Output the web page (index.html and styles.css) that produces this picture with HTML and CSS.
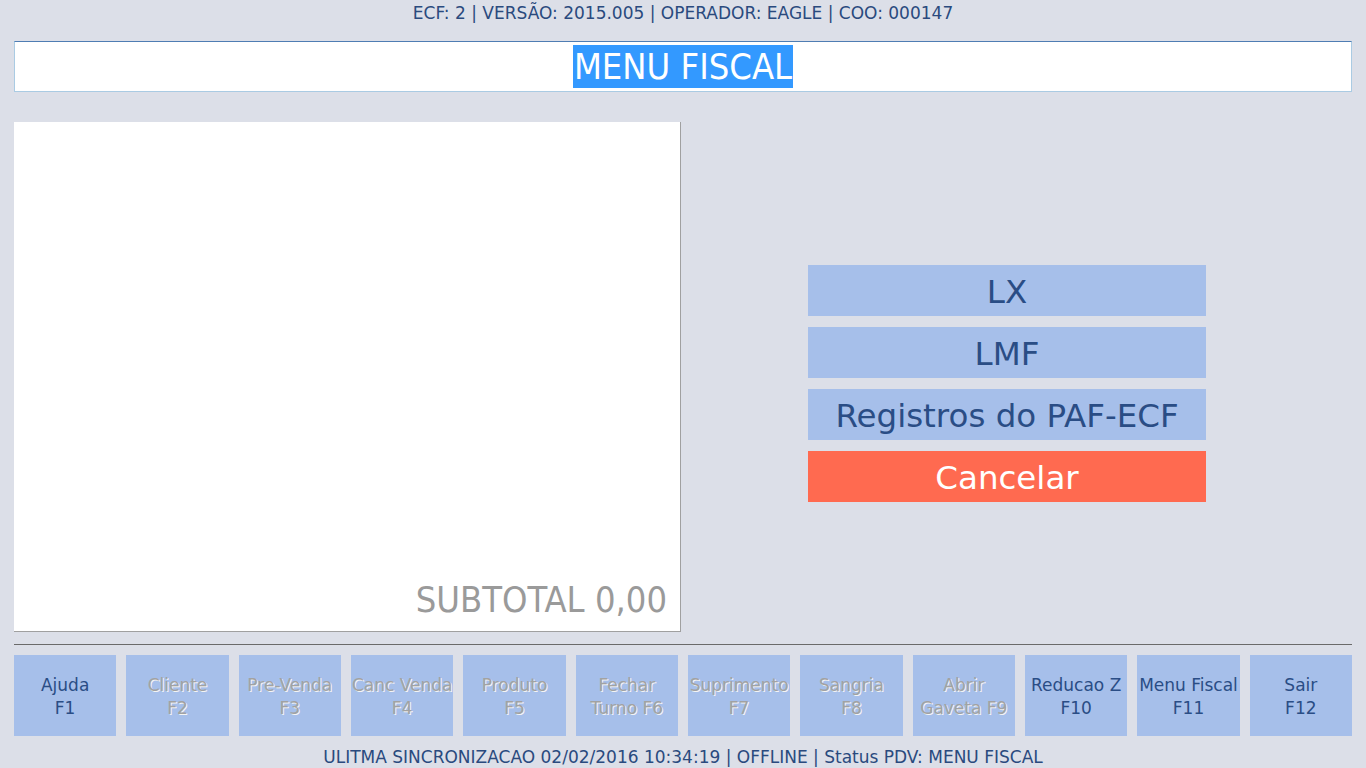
FILE: index.html
```html
<!DOCTYPE html>
<html lang="pt">
<head>
<meta charset="utf-8">
<title>PDV - Menu Fiscal</title>
<link rel="stylesheet" href="styles.css">
</head>
<body>
<div class="app">
  <div class="topbar">ECF: 2 | VERSÃO: 2015.005 | OPERADOR: EAGLE | COO: 000147</div>
  <div class="title"><span class="sel">MENU FISCAL</span></div>
  <div class="main">
    <div class="panel">
      <div class="subtotal">SUBTOTAL 0,00</div>
    </div>
    <div class="menu">
      <div class="mbtn">LX</div>
      <div class="mbtn">LMF</div>
      <div class="mbtn">Registros do PAF-ECF</div>
      <div class="mbtn cancel">Cancelar</div>
    </div>
  </div>
  <div class="rule"></div>
  <div class="fkeys">
    <div class="fkey">Ajuda<br>F1</div>
    <div class="fkey off">Cliente<br>F2</div>
    <div class="fkey off">Pre-Venda<br>F3</div>
    <div class="fkey off">Canc Venda<br>F4</div>
    <div class="fkey off">Produto<br>F5</div>
    <div class="fkey off">Fechar<br>Turno F6</div>
    <div class="fkey off">Suprimento<br>F7</div>
    <div class="fkey off">Sangria<br>F8</div>
    <div class="fkey off">Abrir<br>Gaveta F9</div>
    <div class="fkey">Reducao Z<br>F10</div>
    <div class="fkey">Menu Fiscal<br>F11</div>
    <div class="fkey">Sair<br>F12</div>
  </div>
  <div class="status">ULITMA SINCRONIZACAO 02/02/2016 10:34:19 | OFFLINE | Status PDV: MENU FISCAL</div>
</div>
</body>
</html>
```

FILE: styles.css
```css
html, body {
  margin: 0;
  padding: 0;
  background: #dcdfe8;
}
body {
  font-family: "DejaVu Sans", sans-serif;
  color: #2a4a7e;
}
.app {
  width: 1366px;
  height: 768px;
  display: flex;
  flex-direction: column;
  overflow: hidden;
}
.topbar {
  height: 26px;
  line-height: 27px;
  text-align: center;
  font-size: 17px;
}
.title {
  margin: 15px 14px 0 14px;
  height: 49px;
  background: #fff;
  border: 1px solid #aacbe3;
  border-top-color: #4f7db3;
  display: flex;
  justify-content: center;
  align-items: center;
}
.sel {
  font-family: "DejaVu Sans Condensed", "DejaVu Sans", sans-serif;
  background: #3399ff;
  color: #fff;
  font-size: 36px;
  line-height: 43px;
  padding: 0 1px;
}
.main {
  margin-top: 30px;
  height: 510px;
  display: flex;
}
.panel {
  margin-left: 14px;
  width: 666px;
  height: 509px;
  background: #fff;
  border-right: 1px solid #a0a0a0;
  border-bottom: 1px solid #a0a0a0;
  display: flex;
  align-items: flex-end;
  justify-content: flex-end;
}
.subtotal {
  font-family: "DejaVu Sans Condensed", "DejaVu Sans", sans-serif;
  font-size: 36px;
  color: #9a9a9a;
  padding: 0 13px 9px 0;
  line-height: 44px;
}
.menu {
  margin-left: 127px;
  padding-top: 143px;
  width: 398px;
  display: flex;
  flex-direction: column;
  gap: 11px;
}
.mbtn {
  height: 51px;
  line-height: 54px;
  background: #a6bfea;
  color: #2a4d85;
  font-size: 32.5px;
  text-align: center;
  white-space: nowrap;
}
.mbtn.cancel {
  background: #ff6a50;
  color: #fff;
}
.rule {
  margin: 12px 14px 0 14px;
  height: 1px;
  background: #6a6a6a;
}
.fkeys {
  margin: 10px 14px 0 14px;
  height: 82px;
  display: grid;
  grid-template-columns: repeat(12, 1fr);
  gap: 10px;
}
.fkey {
  background: #a6bfea;
  color: #2a4d85;
  font-size: 17px;
  line-height: 23px;
  padding-top: 4px;
  box-sizing: border-box;
  text-align: center;
  display: flex;
  align-items: center;
  justify-content: center;
  white-space: nowrap;
  overflow: hidden;
}
.fkey.off {
  color: #a2a2a2;
  text-shadow: 1px 1px 0 #f4f4f4;
}
.status {
  padding-top: 10px;
  line-height: 22px;
  text-align: center;
  font-size: 17px;
}
```
